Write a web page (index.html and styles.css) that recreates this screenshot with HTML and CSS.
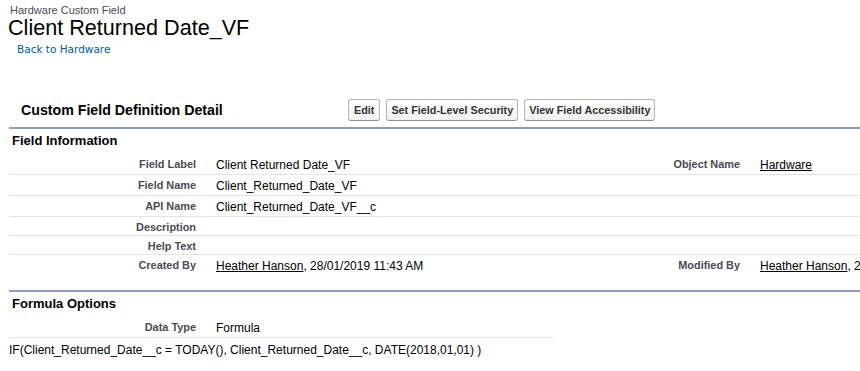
FILE: index.html
```html
<!DOCTYPE html>
<html lang="en">
<head>
  <meta charset="UTF-8">
  <title>Client Returned Date_VF</title>
  <link rel="stylesheet" href="styles.css">
</head>
<body>

<div class="page">
  <div class="page-header">
    <h1 class="page-type">Hardware Custom Field</h1>
    <h2 class="page-title">Client Returned Date_VF</h2>
    <a class="breadcrumb" href="#">Back to Hardware</a>
  </div>

  <div class="block">
    <div class="block-head">
      <h2 class="block-title">Custom Field Definition Detail</h2>
      <div class="buttons">
        <button class="btn">Edit</button>
        <button class="btn">Set Field-Level Security</button>
        <button class="btn">View Field Accessibility</button>
      </div>
    </div>

    <div class="section">
      <h3 class="subheader">Field Information</h3>
      <div class="row">
        <div class="label">Field Label</div>
        <div class="data">Client Returned Date_VF</div>
        <div class="label">Object Name</div>
        <div class="data"><a href="#">Hardware</a></div>
      </div>
      <div class="row">
        <div class="label">Field Name</div>
        <div class="data">Client_Returned_Date_VF</div>
        <div class="label"></div>
        <div class="data"></div>
      </div>
      <div class="row">
        <div class="label">API Name</div>
        <div class="data">Client_Returned_Date_VF__c</div>
        <div class="label"></div>
        <div class="data"></div>
      </div>
      <div class="row">
        <div class="label">Description</div>
        <div class="data"></div>
        <div class="label"></div>
        <div class="data"></div>
      </div>
      <div class="row">
        <div class="label">Help Text</div>
        <div class="data"></div>
        <div class="label"></div>
        <div class="data"></div>
      </div>
      <div class="row">
        <div class="label">Created By</div>
        <div class="data"><a href="#">Heather Hanson</a>, 28/01/2019 11:43 AM</div>
        <div class="label">Modified By</div>
        <div class="data"><a href="#">Heather Hanson</a>, 28/01/2019 11:43 AM</div>
      </div>
    </div>

    <div class="section">
      <h3 class="subheader">Formula Options</h3>
      <div class="row half">
        <div class="label">Data Type</div>
        <div class="data">Formula</div>
      </div>
    </div>
  </div>

  <div class="formula">IF(Client_Returned_Date__c = TODAY(), Client_Returned_Date__c, DATE(2018,01,01) )</div>
</div>

</body>
</html>
```

FILE: styles.css
```css
* { box-sizing: border-box; }
html, body {
  margin: 0;
  overflow: hidden;
}
body {
  background: #fff;
  color: #000;
  font-family: "Liberation Sans", Arial, sans-serif;
  font-size: 12px;
}
.page {
  width: 860px;
  overflow: hidden;
}
.page-header {
  padding-left: 8px;
}
.page-type {
  margin: 0;
  padding: 4px 0 0 2px;
  font-size: 11px;
  line-height: 13px;
  font-weight: normal;
  color: #4a4a56;
}
.page-title {
  margin: 0;
  font-size: 21.6px;
  line-height: 22px;
  font-weight: normal;
  color: #000;
}
.breadcrumb {
  display: inline-block;
  margin: 3px 0 0 9px;
  font-family: "DejaVu Sans", Verdana, sans-serif;
  font-size: 10.5px;
  line-height: 14px;
  color: #015ba7;
  text-decoration: none;
}

.block {
  width: 1088px;
  margin: 43px 0 0 9px;
}
.block-head {
  display: flex;
  align-items: center;
  height: 22px;
  margin-bottom: 6px;
}
.block-title {
  width: 339px;
  margin: 0;
  padding-left: 12px;
  font-size: 14.2px;
  font-weight: bold;
}
.buttons {
  display: flex;
  gap: 6px;
}
.btn {
  height: 22px;
  padding: 0 4px;
  font-family: inherit;
  font-size: 10.8px;
  font-weight: bold;
  color: #333;
  background: linear-gradient(#fff, #f0f0f0);
  border: 1px solid #b5b5b5;
  border-bottom-color: #8f8f8f;
  border-radius: 3px;
}
.btn:first-child {
  padding: 0 5px;
}

.section {
  border-top: 2px solid #8e9dbe;
  margin-bottom: 15px;
}
.subheader {
  margin: 0;
  padding: 2px 0 3px 3px;
  font-size: 13px;
  line-height: 20px;
  font-weight: bold;
  color: #000;
}
.row {
  display: grid;
  grid-template-columns: 197px 347px 197px 347px;
  border-bottom: 1px solid #e3e3e3;
}
.row:last-child {
  border-bottom: none;
}
.row.half {
  width: 544px;
  grid-template-columns: 197px 347px;
  border-bottom: 1px solid #e3e3e3;
}
.label {
  padding: 4px 10px 2px 0;
  text-align: right;
  font-size: 10.9px;
  line-height: 12px;
  font-weight: bold;
  color: #4a4a56;
}
.data {
  padding: 4px 0 2px 10px;
  font-size: 12px;
  line-height: 14px;
  white-space: nowrap;
}
.data a {
  color: #000;
  text-decoration: underline;
}

.formula {
  margin: -10px 0 0 9px;
  font-size: 12px;
  line-height: 14px;
}
```
